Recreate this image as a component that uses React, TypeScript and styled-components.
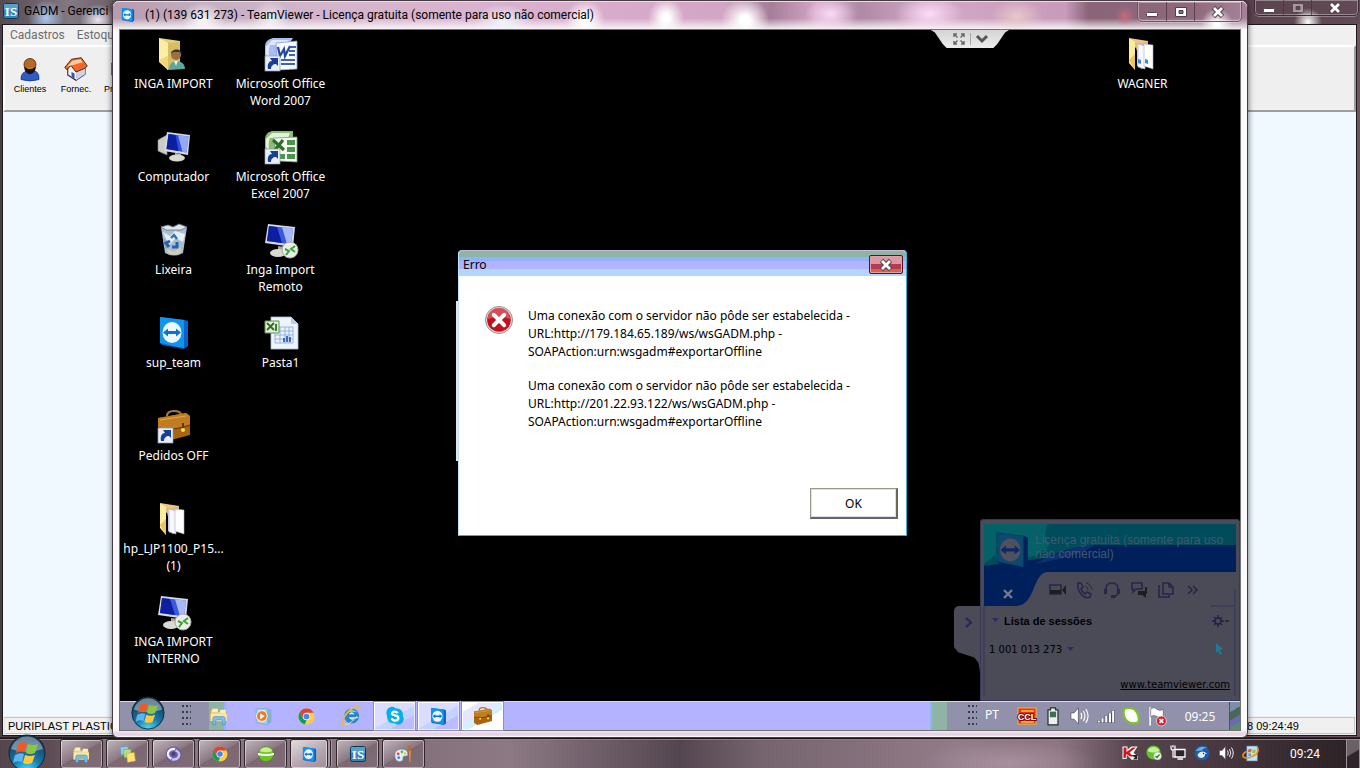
import React from 'react';
import styled, { createGlobalStyle } from 'styled-components';

const ui = 'Roboto, "Open Sans", sans-serif';
const remoteUi = '"Noto Sans", "Open Sans", sans-serif';
const arial = '"Liberation Sans", Arial, sans-serif';
const verdana = '"DejaVu Sans", Verdana, sans-serif';

const GlobalStyle = createGlobalStyle`
  * { box-sizing: border-box; }
  body { margin: 0; background: #4e424a; font-family: ${ui}; font-size: 12px; color: #000; overflow: hidden; }
  button { font: inherit; color: inherit; padding: 0; margin: 0; border: 0; background: none; }
  svg { display: block; flex: none; overflow: visible; }
  p { margin: 0; }
`;

const Screen = styled.div`
  position: relative;
  height: 100vh;
  display: flex;
  flex-direction: column;
  overflow: hidden;
`;

/* ---------- GADM window ---------- */

const MainWindow = styled.section`
  flex: 1;
  min-height: 0;
  display: flex;
  flex-direction: column;
  background: linear-gradient(90deg, #4a3f46, #8b7883 50%, #6d5661);
  padding: 0 3px 1px 2px;
  border-bottom: 1px solid #2a2228;
`;

const MainTitle = styled.header`
  height: 24px;
  flex: none;
  display: flex;
  justify-content: space-between;
  background:
    radial-gradient(ellipse 18px 18px at 46px 18px, #a9c8ee 0, transparent 100%),
    radial-gradient(ellipse 18px 16px at 98px 20px, #e9e4f2 0, transparent 100%),
    radial-gradient(ellipse 14px 14px at calc(100% - 52px) 22px, #fff 0, transparent 100%),
    linear-gradient(90deg, #554a50 0, #837984 70px, #6c6068 113px, #8e7783 60%, #5c444f 92%, #614955);
  margin: 0 -3px 0 -2px;
`;

const MainTitleText = styled.div`
  display: flex;
  gap: 5px;
  padding: 0 0 3px 3px;
  align-items: center;
  white-space: nowrap;
`;

const CaptionButtons = styled.div<{ $tall?: boolean }>`
  display: flex;
  height: ${(p) => (p.$tall ? 20 : 16)}px;
  border: 1px solid ${(p) => (p.$tall ? '#6d5a69' : '#3a2c34')};
  border-top: 0;
  border-radius: 0 0 5px 5px;
  box-shadow: inset 0 0 0 1px rgba(255, 255, 255, 0.35), 0 1px 0 rgba(255, 255, 255, 0.3);
  margin-right: ${(p) => (p.$tall ? 5 : 1)}px;
`;

const CaptionButton = styled.button<{ $wide?: boolean }>`
  width: ${(p) => (p.$wide ? 47 : 28)}px;
  display: flex;
  align-items: center;
  justify-content: center;
  & + & { border-left: 1px solid rgba(70, 50, 62, 0.7); }
`;

const MainBody = styled.div`
  flex: 1;
  min-height: 0;
  display: flex;
  flex-direction: column;
  border: 1px solid #1d181b;
  background: #f0f9ff;
`;

const MenuBar = styled.nav`
  height: 20px;
  flex: none;
  display: flex;
  align-items: center;
  gap: 12px;
  padding-left: 7px;
  background: #f0f0f0;
  color: #6d6d6d;
`;

const MenuItem = styled.button`
  cursor: default;
`;

const ToolBar = styled.div`
  height: 67px;
  flex: none;
  display: flex;
  padding: 10px 0 0 2px;
  background: #efefef;
  border-top: 2px solid #fff;
  border-left: 2px solid #fff;
  border-right: 2px solid #9d9d9d;
  border-bottom: 2px solid #9d9d9d;
`;

const ToolButton = styled.button<{ $start?: boolean }>`
  width: 46px;
  padding-left: ${(p) => (p.$start ? 5 : 0)}px;
  display: flex;
  flex-direction: column;
  align-items: ${(p) => (p.$start ? 'flex-start' : 'center')};
  gap: 2px;
  font-family: ${arial};
  font-size: 9px;
  line-height: 12px;
`;

const Workspace = styled.main`
  flex: 1;
`;

const StatusBar = styled.footer`
  height: 19px;
  flex: none;
  display: flex;
  justify-content: space-between;
  background: #f0f0f0;
  font-family: ${arial};
  font-size: 11px;
  line-height: 16px;
`;

const StatusCell = styled.div<{ $end?: boolean }>`
  width: ${(p) => (p.$end ? '112px' : '400px')};
  margin: 1px;
  padding-left: 3px;
  border: 1px solid;
  border-color: #c4c4c4 #c4c4c4 #c4c4c4 #e4e4e4;
  white-space: nowrap;
`;

/* ---------- TeamViewer window ---------- */

const ViewerWindow = styled.section`
  position: absolute;
  inset: 0 112px 30px 112px;
  display: flex;
  flex-direction: column;
  padding: 0 6px 6px;
  border: 1px solid #463a43;
  border-radius: 7px 7px 6px 6px;
  background:
    linear-gradient(180deg, transparent calc(100% - 8px), #e6cfe2 calc(100% - 3px), #efe2ec 100%),
    #fbf9fb;
  box-shadow: inset 0 0 0 1px rgba(255, 255, 255, 0.7), 0 0 6px rgba(0, 0, 0, 0.6);
`;

const ViewerTitle = styled.header`
  height: 28px;
  flex: none;
  display: flex;
  justify-content: space-between;
  margin: 0 -6px;
  padding-left: 8px;
  border-radius: 6px 6px 0 0;
  border-top: 1px solid #f5d7ee;
  background:
    radial-gradient(ellipse 22px 18px at 90px 18px, rgba(255, 255, 255, 0.9) 0, transparent 100%),
    radial-gradient(ellipse 20px 20px at 158px 18px, rgba(255, 255, 255, 0.7) 0, transparent 100%),
    radial-gradient(ellipse 30px 18px at 390px 20px, rgba(240, 246, 255, 0.95) 0, transparent 100%),
    radial-gradient(ellipse 20px 20px at 472px 18px, #fff 20%, transparent 100%),
    radial-gradient(ellipse 18px 20px at 553px 16px, #fff 20%, transparent 100%),
    radial-gradient(ellipse 24px 22px at 632px 18px, #fff 20%, transparent 100%),
    radial-gradient(ellipse 26px 18px at 718px 12px, rgba(255, 226, 252, 0.9) 0, transparent 100%),
    radial-gradient(ellipse 34px 18px at 816px 12px, rgba(255, 226, 252, 0.9) 0, transparent 100%),
    radial-gradient(ellipse 26px 16px at 904px 14px, rgba(240, 208, 205, 0.8) 0, transparent 100%),
    radial-gradient(ellipse 10px 10px at 1012px 14px, rgba(206, 110, 120, 0.8) 0, transparent 100%),
    radial-gradient(ellipse 16px 16px at calc(100% - 30px) 22px, #fff 10%, transparent 100%),
    linear-gradient(180deg, transparent 60%, rgba(255, 255, 255, 0.85) 100%),
    linear-gradient(90deg, #b79aad 0, #c6b0c3 9%, #d3b5cb 18%, #d9b3cf 30%, #d8abcb 44%, #d3a5c4 54%, #a57e98 58%, #d3a6c4 62%, #b08aa4 66%, #d2a9c6 72%, #c79bb9 84%, #8a6479 86%, #8e677b 95%, #a68299 100%);
`;

const ViewerTitleText = styled.div`
  display: flex;
  align-items: center;
  gap: 10px;
  padding-bottom: 1px;
  white-space: nowrap;
`;

const Remote = styled.div`
  flex: 1;
  min-height: 0;
  display: flex;
  flex-direction: column;
  border: 1px solid #6f7570;
  background: #000;
  font-family: ${remoteUi};
`;

const RemoteDesktop = styled.div`
  position: relative;
  flex: 1;
  min-height: 0;
  display: flex;
  justify-content: space-between;
  padding: 8px 44px 0 0;
  color: #fff;
`;

const IconGrid = styled.div<{ $rows: number }>`
  display: grid;
  grid-auto-flow: column;
  grid-template-rows: repeat(${(p) => p.$rows}, 93px);
  grid-auto-columns: 107px;
  align-content: start;
`;

const Shortcut = styled.button`
  display: flex;
  flex-direction: column;
  align-items: center;
  gap: 5px;
  line-height: 17px;
  color: #fff;
  text-align: center;
  white-space: pre-line;
`;

const FoldTab = styled.div`
  position: absolute;
  top: 0;
  right: 231px;
  width: 78px;
  height: 18px;
  display: flex;
  justify-content: center;
  align-items: center;
  gap: 5px;
  background: linear-gradient(#d4d4d4, #ececec);
  clip-path: polygon(0 0, 100% 0, 95% 14%, 85% 78%, 80% 100%, 20% 100%, 15% 78%, 5% 14%);
`;

const FoldDivider = styled.span`
  width: 1px;
  height: 12px;
  background: #a8a8a8;
`;

const HiddenEdge = styled.div`
  position: absolute;
  left: 336px;
  top: 271px;
  width: 2px;
  height: 160px;
  background: #e4e4ea;
`;

const Dialog = styled.div`
  position: absolute;
  left: 338px;
  top: 220px;
  width: 449px;
  color: #000;
  background: #fff;
  border: 1px solid #2bb5d8;
  border-left-color: #b9e6f7;
  border-top-color: #c3c0da;
  border-radius: 4px 4px 0 0;
`;

const DialogTitle = styled.div`
  height: 25px;
  display: flex;
  justify-content: space-between;
  align-items: center;
  padding: 2px 3px 0 4px;
  border-radius: 3px 3px 0 0;
  background: linear-gradient(#8fb3a5 0 6px, #8fb3ff 6px 10px, #b3b3ff 10px 18px, #b3d5ff 18px);
`;

const DialogClose = styled.button`
  width: 34px;
  height: 19px;
  display: flex;
  align-items: center;
  justify-content: center;
  border: 1px solid #4a1b25;
  border-radius: 2px;
  box-shadow: inset 0 0 0 1px #dfa3a5;
  background: linear-gradient(#dc96a4 0 8px, #b43c50 8px 13px, #d5634e 13px);
`;

const DialogBody = styled.div`
  display: flex;
  gap: 15px;
  padding: 30px 26px 0;
`;

const Message = styled.div`
  display: flex;
  flex-direction: column;
  gap: 16px;
  padding-top: 1px;
  line-height: 18px;
  white-space: pre;
`;

const DialogActions = styled.div`
  display: flex;
  justify-content: flex-end;
  padding: 57px 8px 16px;
`;

const OkButton = styled.button`
  width: 88px;
  height: 31px;
  background: #fff;
  border: 1px solid #9a9a8c;
  border-right: 2px solid #66665a;
  border-bottom: 2px solid #66665a;
  box-shadow: inset 1px 1px 0 #dcdcf4, inset -1px -1px 0 #dcdcf4;
`;

/* ---------- Session panel ---------- */

const SessionPanel = styled.aside`
  position: absolute;
  right: 0;
  bottom: 0;
  display: flex;
  align-items: flex-start;
  color: #000;
`;

const PanelHandle = styled.button`
  width: 26px;
  height: 66px;
  margin-top: 87px;
  display: flex;
  padding: 11px 0 0 10px;
  background: #4b4b58;
  border-radius: 5px 0 0 0;
  clip-path: polygon(0 0, 100% 0, 100% 100%, 94% 86%, 78% 78%, 16% 70%, 0 62%);
`;

const PanelBox = styled.div`
  position: relative;
  width: 260px;
  height: 182px;
  padding: 5px 4px 0;
  background: #4b4b58;
  border: 1px solid #383858;
  border-radius: 3px 3px 0 0;
  display: flex;
  flex-direction: column;
`;

const PanelArt = styled.svg`
  position: absolute;
  left: 3px;
  top: 4px;
`;

const PanelHeader = styled.div`
  position: relative;
  height: 48px;
  display: flex;
  gap: 5px;
  padding: 8px 0 0 10px;
  font-family: ${arial};
  color: #3f5a6e;
  line-height: 14px;
`;

const PanelTools = styled.div`
  position: relative;
  height: 34px;
  display: flex;
  align-items: center;
  gap: 9px;
  padding-left: 17px;
  & > :first-child { margin: 8px 26px 0 0; }
`;

const PanelRow = styled.div<{ $bold?: boolean }>`
  display: flex;
  align-items: center;
  justify-content: space-between;
  height: ${(p) => (p.$bold ? 27 : 30)}px;
  padding: 0 5px 0 ${(p) => (p.$bold ? 7 : 4)}px;
  font-family: ${(p) => (p.$bold ? arial : verdana)};
  font-size: ${(p) => (p.$bold ? 11 : 10)}px;
  font-weight: ${(p) => (p.$bold ? 700 : 400)};
`;

const RowLabel = styled.span`
  display: flex;
  align-items: center;
  gap: 5px;
`;

const PanelLink = styled.a`
  align-self: flex-end;
  margin: 14px 5px 0 0;
  font-family: ${verdana};
  font-size: 10px;
  line-height: 14px;
  color: #000;
`;

/* ---------- Taskbars ---------- */

const RemoteTaskbar = styled.footer`
  position: relative;
  height: 29px;
  flex: none;
  display: flex;
  align-items: stretch;
  border-top: 1px solid #d9d9e6;
  background: linear-gradient(90deg, #9191ab 0 89px, #8fb3a5 89px 104px, #8fb3ff 104px 106px, #b3b3ff 106px calc(100% - 310px), #8fb3ff calc(100% - 310px) calc(100% - 308px), #8fb3a5 calc(100% - 308px) calc(100% - 293px), #9191ab calc(100% - 293px));
`;

const RemoteStart = styled.button`
  width: 34px;
  height: 32px;
  margin: -4px 17px 0 11px;
  display: flex;
  align-items: flex-end;
`;

const Grip = styled.span`
  width: 9px;
  height: 22px;
  align-self: center;
  background: radial-gradient(circle at 1px 1px, #33404c 1px, transparent 1px) 0 0 / 4px 6px;
`;

const RemoteItems = styled.div`
  flex: 1;
  display: flex;
  gap: 3px;
  padding-left: 7px;
`;

const RemoteItem = styled.button<{ $state?: 'open' | 'active' }>`
  width: 41px;
  display: flex;
  align-items: center;
  justify-content: center;
  ${(p) => p.$state === 'open' && `
    background: linear-gradient(150deg, #dcdcff 0 52%, #c4d2ff 52% 70%, #bcbcff 70%);
    box-shadow: 0 0 0 1px #8f8fb0, inset 1px 1px 0 #fff, inset -1px -1px 0 #e9e9ff;
  `}
  ${(p) => p.$state === 'active' && `
    background: linear-gradient(150deg, #fff 0 20%, #e6e6ff 20% 45%, #d4f0ff 45% 60%, #fff 60%);
    box-shadow: 0 0 0 1px #8f8fb0, inset 0 0 0 1px #fff;
  `}
`;

const RemoteTray = styled.div`
  display: flex;
  align-items: center;
  color: #fff;
`;

const TrayIcons = styled.div<{ $gap: number }>`
  display: flex;
  gap: ${(p) => p.$gap}px;
`;

const Lang = styled.span`
  width: 40px;
  padding-left: 8px;
  padding-bottom: 4px;
`;

const RemoteClock = styled.time`
  width: 62px;
  padding-left: 4px;
  text-align: center;
`;

const RemoteShow = styled.button`
  width: 11px;
  align-self: stretch;
  border-left: 1px solid #44586a;
  background: linear-gradient(150deg, #7d8ea5 0 30%, #46695c 30% 55%, #6a6ab0 55% 75%, #5d8a70 75%);
`;

const HostTaskbar = styled.footer`
  position: relative;
  height: 30px;
  flex: none;
  display: flex;
  border-top: 1px solid #1c161a;
  box-shadow: inset 0 1px 0 #8d7e87;
  background:
    radial-gradient(ellipse 90px 22px at 1010px 24px, rgba(190, 165, 180, 0.5), transparent),
    linear-gradient(90deg, #55454d 0, #5d4c54 50px, #8b7681 120px, #84717b 420px, #8c7984 510px, #544650 680px, #75646e 760px, #937c89 960px, #8d7682 1060px, #57454e 1130px, #4a3941 1210px, #33282d 1310px, #2a2226);
`;

const HostStart = styled.button`
  position: relative;
  width: 38px;
  margin: -5px 14px 0 8px;
`;

const HostItems = styled.div`
  flex: 1;
  display: flex;
  gap: 3px;
`;

const HostItem = styled.button<{ $active?: boolean; $stack?: boolean }>`
  width: 43px;
  display: flex;
  align-items: center;
  justify-content: center;
  border: 1px solid #2f252a;
  border-bottom: 0;
  border-radius: 3px;
  box-shadow: inset 0 0 0 1px rgba(255, 255, 255, 0.45);
  background: ${(p) =>
    p.$active
      ? 'linear-gradient(150deg, #e4dde1, #b5a7b0 55%, #9f8d98)'
      : 'linear-gradient(150deg, #c2b7bd, #8a7782 48%, #7b6872 50%, #806c77)'};
  ${(p) => p.$stack && 'width: 38px; margin-right: 5px; box-shadow: inset 0 0 0 1px #d8cfd5, 2px 0 0 #a5969f, 3px 0 0 #2f252a, 4px 0 0 #a5969f;'}
`;

const HostTray = styled.div`
  display: flex;
  align-items: center;
  color: #fff;
`;

const HostClock = styled.time`
  width: 87px;
  padding-left: 5px;
  text-align: center;
`;

const HostShow = styled.button`
  width: 14px;
  align-self: stretch;
  border: 1px solid #9c8f96;
  border-bottom: 0;
  background: linear-gradient(150deg, #6c6067 45%, #2d2529 50%);
`;

/* ---------- Icons ---------- */

type IconProps = { size?: number };

const Svg = ({ size = 32, children }: IconProps & { children: React.ReactNode }) => (
  <svg width={size} height={size} viewBox="0 0 32 32" aria-hidden="true">{children}</svg>
);

const Arrow = () => (
  <g>
    <rect x="0" y="18" width="15" height="15" fill="#e8eef8" stroke="#8f9bb5" strokeWidth=".7" />
    <path d="M3 31c-1-5 1-8 4-8l-2-3h8v8l-2-2c-3 0-5 2-5 5z" fill="#173f96" />
  </g>
);

const FolderUser = () => (
  <Svg>
    <path d="M1 0l21 3v24l-12 3z" fill="#e8d080" />
    <path d="M8 5l14-1v25l-13 3z" fill="#d9bd62" />
    <path d="M1 0l9 5v27l-9-8z" fill="#fbeea5" />
    <path d="M1 22l9 10V18z" fill="#efd676" />
    <circle cx="18" cy="17" r="5" fill="#9c6f4c" />
    <path d="M13 16c0-6 11-6 11 0l-3-2h-6z" fill="#3a3430" />
    <path d="M11 32c0-7 4-9 8-9s8 3 8 8z" fill="#5da79a" />
    <path d="M16 23l2 5 2-5z" fill="#e6f0ef" />
  </Svg>
);

const WordIcon = () => (
  <Svg>
    <path d="M8 0h20l-4 6v26H0V8q0-6 8-8z" fill="#a9bdf0" />
    <path d="M7 2h17l-4 5H5q-2 4-1 12l-3-3V9z" fill="#dfe8ff" />
    <path d="M11 5l21-2v28l-19 1z" fill="#f8faff" stroke="#7d97d6" strokeWidth=".8" />
    <path d="M13 9l2 9 4-7 1 7 5-10" stroke="#25479e" strokeWidth="2.200" fill="none" />
    <path d="M25 9h6M24 13h6M24 17h6M16 22h14M16 26h14" stroke="#3c62bd" strokeWidth="2" />
    <Arrow />
  </Svg>
);

const ExcelIcon = () => (
  <Svg>
    <path d="M7 0h21v6L14 30H0V8q0-6 7-8z" fill="#8dba7a" />
    <path d="M7 2h18l-2 5H5q-2 4-1 12l-3-3V8z" fill="#e1f3d8" />
    <path d="M8 7l24-1v25l-18-1z" fill="#f5fbf2" stroke="#6fa45c" strokeWidth=".8" />
    <path d="M22 9h8v5h-8zM22 16h8v5h-8zM22 23h8v5h-8zM15 23h5v5h-5z" fill="#4e9350" />
    <path d="M8 9l11 10M18 9l-8 10" stroke="#2c6e28" strokeWidth="3.200" />
    <Arrow />
  </Svg>
);

const Monitor = ({ remote }: { remote?: boolean }) => (
  <Svg>
    {!remote && <path d="M0 9l9-5v20l-9-4z" fill="#c9cdc4" stroke="#8d9188" strokeWidth=".6" />}
    {remote ? (
      <>
        <path d="M13 22l6 1v5h-6z" fill="#a6a9a0" />
        <ellipse cx="13" cy="29" rx="8" ry="4" fill="#d9dad0" />
        <path d="M3 0l27 3-2 20-28-4z" fill="#d6dae2" />
        <path d="M4 2l24 2.500-2 16-24-3.500z" fill="#3a58e0" />
        <path d="M4 2l8 1 5 16-15-2z" fill="#0b1fa0" />
        <path d="M17 3.300l11 1.200-2 16-4-.500z" fill="#a9b9f6" />
        <circle cx="25" cy="26" r="8" fill="#eceee9" stroke="#a7aaa2" />
        <path d="M20 25l4 2-3 4M30 22l-4 3 4 3" stroke="#3fa33b" strokeWidth="2" fill="none" />
      </>
    ) : (
      <>
        <path d="M17 22l6 1v4h-6z" fill="#a6a9a0" />
        <ellipse cx="19" cy="27" rx="8" ry="3.500" fill="#d9dad0" />
        <path d="M9 1l23 3-2 20-24-4z" fill="#d6dae2" />
        <path d="M10.500 3l20 2.500-2 16-20-3.500z" fill="#2f4fe0" />
        <path d="M10.500 3l7 1 3 16-12-2z" fill="#0b1fa0" />
        <path d="M20 4.300l10.500 1.200-2 16-4-.700z" fill="#95a8f4" />
      </>
    )}
  </Svg>
);

const Bin = () => (
  <Svg>
    <path d="M3 3l26 0-4 26q-9 5-18 0z" fill="#b4c8dc" opacity=".95" />
    <path d="M3 3l7-2 5 2 6-3 8 3-6 3H8z" fill="#dfe6ec" stroke="#6b7885" strokeWidth=".9" />
    <path d="M5 8l7 4 5-5 10 3-2 8-7-4-7 7z" fill="#e7eff6" />
    <path d="M5 14l5 4-1 7-2-1z" fill="#8ea6bd" />
    <path d="M9 25l7 3 7-5-1 6q-6 3-12 0z" fill="#d5cfae" />
    <path d="M13 14l3-3 3 4" stroke="#2a72b9" strokeWidth="2.400" fill="none" />
    <path d="M19 18v5h-5M11 23l-3-4 4-2" stroke="#2a62a9" strokeWidth="3" fill="none" />
  </Svg>
);

const TeamViewerIcon = ({ size, dim }: IconProps & { dim?: boolean }) => (
  <Svg size={size}>
    <path d="M2 0l25 3 3 1v25l-4 3-22-4-2-2z" fill={dim ? '#06225e' : '#0a62c9'} />
    <path d="M2 0l24 3v28L2 26z" fill={dim ? '#0b4a6e' : '#0d95f2'} />
    <ellipse cx="14" cy="15.500" rx="9.500" ry="10.500" fill={dim ? '#50505e' : '#eef6ff'} />
    <path d="M5 15.500l5-4v2.500h8v-2.500l5 4-5 4v-2.500h-8v2.500z" fill={dim ? '#0a2a66' : '#0b73d4'} />
  </Svg>
);

const SheetIcon = () => (
  <Svg>
    <path d="M6 0h20l7 7v25H6z" fill="#eef4fd" stroke="#a9bbda" strokeWidth=".8" />
    <path d="M26 0l7 7h-7z" fill="#bccbe6" />
    <path d="M10 10h18v16H10zM10 14h18M10 18h18M10 22h18M15 10v16M20 10v16M24 10v16" stroke="#93b1df" fill="none" />
    <path d="M19 25v-4M22 25v-6M25 25v-5" stroke="#3e6cb8" strokeWidth="2" />
    <path d="M0 4h14v12H0z" fill="#dff0d6" stroke="#5a9a4a" />
    <path d="M2 6l7 7M9 6l-7 7M11 7v7" stroke="#2c6e28" strokeWidth="1.800" />
  </Svg>
);

const Briefcase = ({ size, link }: IconProps & { link?: boolean }) => (
  <Svg size={size}>
    <path d="M9 6q0-5 7-5t7 4" stroke="#a37a3c" strokeWidth="2.200" fill="none" />
    <path d="M0 8l28-5 4 3v19L6 32l-6-4z" fill="#a8640f" />
    <path d="M0 8l28-5 4 3v9q-14 6-32 4z" fill="#c07c1e" />
    <path d="M0 18q16 3 32-3" stroke="#5e3508" fill="none" strokeWidth="1.200" />
    <path d="M2 10l26-4" stroke="#e2ab55" />
    <path d="M25 13v6" stroke="#5e3508" strokeWidth="2" />
    <circle cx="25" cy="20" r="2" fill="#ffe14f" />
    {link ? <Arrow /> : <circle cx="11" cy="21" r="1.800" fill="#ffe14f" />}
  </Svg>
);

const FolderFiles = ({ blue }: { blue?: boolean }) => (
  <Svg>
    <path d="M2 0l19 3v4l-14 3z" fill="#eec787" />
    <path d="M8 5l13-1v24l-7 3z" fill="#e3b877" />
    <path d="M10 6l6 1v23l-6-2z" fill="#d4d7ea" />
    <path d="M11 6l7 2v23l-7-2z" fill="#f6f7ff" stroke="#adb0cd" strokeWidth=".6" />
    <path d="M17 6l9 1v24l-9-3z" fill="#fff" stroke="#a9abc6" strokeWidth=".6" />
    {blue && <path d="M11 21l3 1v4l-3-1zM18 21l3 1v4l-3-1z" fill="#3b8ec4" />}
    <path d="M2 0l6 4v28l-6-7z" fill="#fbeb9b" />
    <path d="M2 22l6 10V16z" fill="#eac65b" />
  </Svg>
);

const Person = () => (
  <Svg size={24}>
    <path d="M4 30q-1-11 12-12t12 12q-12 4-24 0z" fill="#2d5cc8" stroke="#17317c" />
    <circle cx="16" cy="10" r="8" fill="#b96a22" stroke="#3b1d08" />
    <path d="M8 13q8 5 16 0-1 9-8 10-7-1-8-10z" fill="#1d120c" />
    <path d="M12 13q4 3 8 0v2q-4 2-8 0z" fill="#c5833f" />
  </Svg>
);

const House = () => (
  <Svg size={24}>
    <path d="M5 12v12l11 7 12-8V11z" fill="#f2f2fa" stroke="#222" strokeWidth="1.400" />
    <path d="M16 18v13l12-8V11z" fill="#cfd2e6" />
    <path d="M1 14L10 3l13-2 8 11-3 3-12 5-7-9-5 6z" fill="#f0692a" stroke="#4b1a08" strokeWidth="1.200" />
    <path d="M4 13l7-8 11-2 3 4-14 4z" fill="#ffc9a4" />
    <path d="M10 20l4 2v7l-4-3z" fill="#3a51b5" />
  </Svg>
);

const Product = () => (
  <Svg size={24}>
    <path d="M10 8l12-5 10 5v16l-10 6-12-6z" fill="#efae62" stroke="#98591d" />
  </Svg>
);

const IsIcon = ({ size }: IconProps) => (
  <svg width={size} height={size} viewBox="0 0 16 16" aria-hidden="true">
    <rect x=".5" y=".5" width="15" height="15" rx="2" fill="#3685b8" stroke="#12384f" />
    <path d="M1 1h14v6H1z" fill="#6fb3d9" opacity=".6" />
    <text x="8" y="13" fontFamily="Liberation Serif" fontWeight="700" fontSize="13" fill="#fff" textAnchor="middle">IS</text>
  </svg>
);

const Orb = ({ size }: IconProps) => (
  <svg width={size} height={size} viewBox="0 0 38 38" aria-hidden="true">
    <defs>
      <radialGradient id="orbFill" cx=".5" cy="1" r=".9">
        <stop offset="0" stopColor="#4fe0ff" />
        <stop offset=".45" stopColor="#1878ac" />
        <stop offset="1" stopColor="#163a58" />
      </radialGradient>
    </defs>
    <circle cx="19" cy="19" r="18" fill="url(#orbFill)" stroke="#13222f" />
    <path d="M3 15a16.500 16.500 0 0 1 32 0q-16 6-32 0z" fill="#fff" opacity=".38" />
    <path d="M10 10q5-3 9-1l-2 9q-5-2-9 1z" fill="#ef5a29" />
    <path d="M20 10q5 2 10 0l-3 9q-5 2-9 0z" fill="#8cc63f" />
    <path d="M7 21q5-3 9-1l-2 8q-5-2-9 1z" fill="#5cb5ee" />
    <path d="M17 21q5 2 10 0l-3 8q-5 2-9 0z" fill="#ffcb3d" />
  </svg>
);

const Explorer = ({ size }: IconProps) => (
  <Svg size={size}>
    <path d="M1 5h10l2 3h16v18H1z" fill="#ecd27b" stroke="#a98b3a" strokeWidth=".8" />
    <path d="M4 3h10v6H4zM18 5h10v6H18z" fill="#f7f0c0" />
    <path d="M1 12h29v13H1z" fill="#f9e9a4" />
    <path d="M5 31V21q0-4 4-4h14q4 0 4 4v10h-5v-6q0-2-2-2h-8q-2 0-2 2v6z" fill="#7cc0ea" stroke="#3f86bb" />
  </Svg>
);

const MediaPlayer = () => (
  <Svg size={18}>
    <path d="M4 3h19l7 3v21l-7 4-19-3z" fill="#a9d4ec" stroke="#6a98bc" />
    <path d="M23 3l7 3v21l-7 4z" fill="#7fb2d2" />
    <circle cx="14" cy="16" r="9.500" fill="#f07a1f" stroke="#fff" strokeWidth="1.500" />
    <path d="M11 11l8 5-8 6z" fill="#fff" />
  </Svg>
);

const Chrome = ({ size }: IconProps) => (
  <Svg size={size}>
    <circle cx="16" cy="16" r="15" fill="#ffcd40" />
    <path d="M16 9h13.300A15 15 0 0 0 3 8.500L10 20z" fill="#db4437" />
    <path d="M3 8.500L10 20l6 3-3 7.700A15 15 0 0 1 3 8.500z" fill="#0f9d58" />
    <circle cx="16" cy="16" r="7" fill="#f1f1f1" />
    <circle cx="16" cy="16" r="5.400" fill="#4285f4" />
  </Svg>
);

const InternetExplorer = () => (
  <Svg size={20}>
    <circle cx="17" cy="16" r="12" fill="#2586cc" />
    <path d="M8 11q8-9 18-1-9-2-18 1z" fill="#8fd0f4" />
    <path d="M12 13q5-6 10 0zM12 18h17q-2 2-8 2-3 5-9-2z" fill="#d4ecfb" />
    <path d="M6 30Q-2 30 5 18T20 3q11-5 9 4" stroke="#e9b93a" strokeWidth="2.800" fill="none" />
    <path d="M6 30q10-1 20-14" stroke="#f6dc86" strokeWidth="1.600" fill="none" />
  </Svg>
);

const Skype = () => (
  <Svg size={18}>
    <path d="M3 3q7-6 14-1 14 0 13 14 4 7-2 13-7 5-13 0Q2 30 2 17-1 9 3 3z" fill="#00aff0" />
    <path d="M21 11q-2-3-6-3-4 .500-4 4 0 2 5 3 6 1 6 5 0 4-6 4-5 0-6-4" stroke="#fff" strokeWidth="4" fill="none" />
  </Svg>
);

const Notes = () => (
  <Svg size={17}>
    <path d="M2 2l15-1 1 14-14 2z" fill="#8fd0ee" stroke="#5390b0" />
    <path d="M8 7l14-1 2 14-14 2z" fill="#b6e07f" stroke="#759c48" />
    <path d="M14 14l15-2 2 16-15 3z" fill="#ffe173" stroke="#b99a33" />
  </Svg>
);

const Swirl = () => (
  <Svg size={17}>
    <circle cx="16" cy="16" r="15" fill="#6a60a4" />
    <path d="M12 24Q2 18 7 10q4-6 12-4" stroke="#f3f1ff" strokeWidth="4.500" fill="none" />
    <path d="M20 8q9 5 6 12-4 7-13 5" stroke="#c9c4ea" strokeWidth="4.500" fill="none" />
    <circle cx="16" cy="15" r="4" fill="#4a4184" />
  </Svg>
);

const GreenBall = () => (
  <Svg size={16}>
    <circle cx="16" cy="16" r="15" fill="#6cc820" stroke="#3c8a10" />
    <path d="M3 10a15 15 0 0 1 26 0q-13 5-26 0z" fill="#c6f08a" />
    <path d="M0 14q16 4 32 0v4q-16 4-32 0z" fill="#fff" />
  </Svg>
);

const Palette = () => (
  <Svg size={17}>
    <path d="M0 20Q-2 7 11 6q14 0 13 10-1 4-6 3-4 0-3 5 0 5-6 5-8 0-9-9z" fill="#e1eef8" stroke="#6d8da8" />
    <circle cx="6" cy="15" r="2.600" fill="#e2493b" />
    <circle cx="13" cy="11" r="2.600" fill="#57b947" />
    <circle cx="7" cy="22" r="2.600" fill="#3c87da" />
    <circle cx="19" cy="14" r="2.200" fill="#efc42f" />
    <path d="M26 8h4l-1 22h-2z" fill="#f08a24" />
    <path d="M24 0h7l-1 9h-4z" fill="#b96c2d" />
  </Svg>
);

const Caption = ({ kind, dim }: { kind: 'min' | 'max' | 'close'; dim?: boolean }) => (
  <svg width="14" height="12" viewBox="0 0 14 12" opacity={dim ? 0.45 : 1} aria-hidden="true">
    {kind === 'min' && <rect x="1.500" y="6.500" width="11" height="4" rx="1" fill="#fff" stroke="#50424b" />}
    {kind === 'max' && <path d="M1.500 1.500h11v9h-11zM5 4.500v3h4v-3z" fill="#fff" fillRule="evenodd" stroke="#50424b" />}
    {kind === 'close' && (
      <>
        <path d="M2.500 1.500l9 9M11.500 1.500l-9 9" stroke="#50424b" strokeWidth="4.600" />
        <path d="M3 2l8 8M11 2l-8 8" stroke="#fff" strokeWidth="2.800" />
      </>
    )}
  </svg>
);

const ErrorIcon = () => (
  <Svg size={28}>
    <circle cx="16" cy="16" r="15.500" fill="#d4d4d8" stroke="#8b8b93" />
    <circle cx="16" cy="16" r="13.500" fill="#c3101a" />
    <path d="M3 15a13 13 0 0 1 26 0q-13-5-26 0z" fill="#e0606a" opacity=".75" />
    <path d="M10 10l12 12M22 10L10 22" stroke="#fff" strokeWidth="4.500" strokeLinecap="round" />
  </Svg>
);

const CclIcon = () => (
  <svg width="20" height="20" viewBox="0 0 20 20" aria-hidden="true">
    <rect x="1" y="2" width="18" height="16" fill="#e23412" stroke="#ffb040" />
    <path d="M4 5h13M4 16h13" stroke="#ff9a2e" strokeWidth="2" />
    <text x="10" y="14" fontFamily="Liberation Sans" fontWeight="700" fontSize="9" fill="#fff" stroke="#7a1008" strokeWidth="2" paintOrder="stroke" textAnchor="middle">CCL</text>
  </svg>
);

const Battery = () => (
  <Svg size={20}>
    <path d="M12 3h8v3h4v24H8V6h4z" fill="#e9f1ec" stroke="#26332c" strokeWidth="2" />
    <path d="M11 9h10v9H11z" fill="#426b55" />
  </Svg>
);

const Speaker = ({ size = 20 }: IconProps) => (
  <Svg size={size}>
    <path d="M3 11h5l7-8v26l-7-8H3z" fill="#fff" stroke="#505060" strokeWidth="1.200" />
    <path d="M19 11q3 5 0 10M23 8q5 8 0 16M27 5q7 11 0 22" stroke="#fff" strokeWidth="1.800" fill="none" />
  </Svg>
);

const Signal = () => (
  <Svg size={20}>
    <path d="M6 27v-4M12 27v-8M18 27V15M24 27V11M29 27V7" stroke="#4c4c62" strokeWidth="5" />
    <path d="M6 26.500v-3M12 26.500v-7M18 26.500V15.500M24 26.500V11.500M29 26.500V7.500" stroke="#fff" strokeWidth="3.200" />
  </Svg>
);

const GreenLeaf = () => (
  <Svg size={20}>
    <path d="M5 5q10-4 17 1 8 8 6 20-9 4-17-1Q2 17 5 5z" fill="#fff" stroke="#7cc520" strokeWidth="3.400" />
  </Svg>
);

const Flag = () => (
  <Svg size={20}>
    <path d="M5 2v29" stroke="#fff" strokeWidth="2.500" />
    <path d="M6 4q6-3 10 1t10 0v13q-5 3-10-1t-10 0z" fill="#fff" stroke="#55556a" />
    <circle cx="23" cy="24" r="8" fill="#d1242d" stroke="#fff" />
    <path d="M20 21l6 6M26 21l-6 6" stroke="#fff" strokeWidth="2.500" />
  </Svg>
);

const Kaspersky = () => (
  <Svg size={16}>
    <path d="M1 3h10v6l8-6h12l-8 13 8 6v8H20L10 20l-1 8H1z" fill="#fff" />
    <path d="M3 5h6v9L21 5h7L15 15l7 8h-6L9 18l-2 8H3z" fill="#d3141c" />
    <path d="M18 20l12 0v9h-9l5-4z" fill="#222" />
  </Svg>
);

const GreenCheck = () => (
  <Svg size={16}>
    <circle cx="15" cy="15" r="14" fill="#63c22a" />
    <path d="M3 12a13 13 0 0 1 24 0q-12 6-24 0z" fill="#c2f095" />
    <circle cx="23" cy="22" r="8" fill="#f2f6ee" stroke="#7c9a70" />
    <path d="M19 22l3 3 5-6" stroke="#2a7a1a" strokeWidth="2.400" fill="none" />
  </Svg>
);

const Network = () => (
  <Svg size={16}>
    <path d="M10 9h20v15H10zM15 28h11" stroke="#fff" strokeWidth="2.600" fill="#2e2529" />
    <path d="M2 1v5q0 4 4 4t4-4V1M6 0v5M6 10v14h5" stroke="#fff" strokeWidth="2.400" fill="none" />
  </Svg>
);

const BirdIcon = () => (
  <Svg size={16}>
    <circle cx="16" cy="16" r="15" fill="#1d5ca6" />
    <path d="M3 12Q12 0 26 5q-8 1-10 6z" fill="#67b0ea" />
    <path d="M7 19q6-8 14-5l5 3-4 1q0 8-8 8-6-1-7-7z" fill="#e9eef4" />
    <circle cx="19" cy="17" r="1.500" fill="#222" />
  </Svg>
);

const UpdateIcon = () => (
  <Svg size={17}>
    <path d="M9 2h20v28H9z" fill="#bfe2f7" stroke="#4f98c8" />
    <path d="M12 8q4-2 6 0l-1 6q-3-2-6 0z" fill="#ef5a29" />
    <path d="M20 8q3 2 6 0l-1 6q-3 2-6 0z" fill="#8cc63f" />
    <path d="M12 16h5v5h-5z" fill="#3fa1e6" />
    <path d="M19 16h5v5h-5z" fill="#ffcb3d" />
    <path d="M29 4q5 10-8 17T2 22q-2-5 6-10" stroke="#f08a24" strokeWidth="3" fill="none" />
  </Svg>
);

const line = { fill: 'none', stroke: '#26264a', strokeWidth: 1.6 };

const Camera = () => (
  <svg width="18" height="16" viewBox="0 0 18 16" aria-hidden="true">
    <path d="M1 3h11v9H1z" {...line} />
    <path d="M1 8h11v4H1zM13 8l4-5v10z" fill="#1d1d22" />
  </svg>
);
const Phone = () => (
  <svg width="18" height="16" viewBox="0 0 18 16" aria-hidden="true">
    <path d="M2 1l3 0 2 4-2 2q1 3 4 5l2-2 4 2-1 3q-5 2-9-3T2 1z" {...line} />
    <path d="M9 4q3 1 3 4M10 1q5 1 6 7" {...line} strokeWidth={1} />
  </svg>
);
const Headset = () => (
  <svg width="18" height="16" viewBox="0 0 18 16" aria-hidden="true">
    <path d="M3 9V7q0-6 6-6t6 6v2q0 5-5 6" {...line} />
    <path d="M1 7h3v5H1zM14 7h3v5h-3zM8 13h4v3H8z" fill="#26264a" />
  </svg>
);
const Chat = () => (
  <svg width="18" height="16" viewBox="0 0 18 16" aria-hidden="true">
    <path d="M2 1h10v6H6l-3 3V7H2z" {...line} />
    <path d="M8 9h7V5h2v7h-1v4l-4-3H8z" fill="#1d1d22" />
  </svg>
);
const Pages = () => (
  <svg width="18" height="16" viewBox="0 0 18 16" aria-hidden="true">
    <path d="M6 1h6l4 4v7H6zM12 1v4h4" {...line} />
    <path d="M3 4H2v11h10v-2" {...line} />
  </svg>
);
const Chevrons = () => (
  <svg width="18" height="16" viewBox="0 0 18 16" aria-hidden="true">
    <path d="M4 4l4 4-4 4M9 4l4 4-4 4" {...line} />
  </svg>
);
const Down = () => (
  <svg width="7" height="5" viewBox="0 0 7 5" aria-hidden="true"><path d="M0 0h7L3.500 4z" fill="#2c2c66" /></svg>
);

/* ---------- Page ---------- */

const shortcuts = [
  { label: 'INGA IMPORT', icon: <FolderUser /> },
  { label: 'Computador', icon: <Monitor /> },
  { label: 'Lixeira', icon: <Bin /> },
  { label: 'sup_team', icon: <TeamViewerIcon size={32} /> },
  { label: 'Pedidos OFF', icon: <Briefcase size={32} link /> },
  { label: 'hp_LJP1100_P15...\n(1)', icon: <FolderFiles /> },
  { label: 'INGA IMPORT\nINTERNO', icon: <Monitor remote /> },
  { label: 'Microsoft Office\nWord 2007', icon: <WordIcon /> },
  { label: 'Microsoft Office\nExcel 2007', icon: <ExcelIcon /> },
  { label: 'Inga Import\nRemoto', icon: <Monitor remote /> },
  { label: 'Pasta1', icon: <SheetIcon /> },
];

const WindowControls = ({ tall }: { tall?: boolean }) => (
  <CaptionButtons $tall={tall}>
    <CaptionButton aria-label="Minimizar"><Caption kind="min" /></CaptionButton>
    <CaptionButton aria-label="Maximizar"><Caption kind="max" dim={!tall} /></CaptionButton>
    <CaptionButton $wide aria-label="Fechar"><Caption kind="close" /></CaptionButton>
  </CaptionButtons>
);

const serverError = (host: string) =>
  `Uma conexão com o servidor não pôde ser estabelecida -\nURL:http://${host}/ws/wsGADM.php -\nSOAPAction:urn:wsgadm#exportarOffline`;

const ErrorDialog = () => (
  <Dialog role="dialog" aria-labelledby="erro-title">
    <DialogTitle>
      <span id="erro-title">Erro</span>
      <DialogClose aria-label="Fechar"><Caption kind="close" /></DialogClose>
    </DialogTitle>
    <DialogBody>
      <ErrorIcon />
      <Message>
        <p>{serverError('179.184.65.189')}</p>
        <p>{serverError('201.22.93.122')}</p>
      </Message>
    </DialogBody>
    <DialogActions><OkButton>OK</OkButton></DialogActions>
  </Dialog>
);

const Sessions = () => (
  <SessionPanel>
    <PanelHandle aria-label="Recolher">
      <svg width="9" height="11" viewBox="0 0 9 11" aria-hidden="true">
        <path d="M2 1l5 4.500-5 4.500" fill="none" stroke="#26265c" strokeWidth="2.200" />
      </svg>
    </PanelHandle>
    <PanelBox>
      <PanelArt width="252" height="177" viewBox="0 0 252 177" aria-hidden="true">
        <path d="M0 0h252v48H64C48 48 52 82 32 82H0z" fill="#00205c" />
        <path d="M0 0h252v21H110Q80 24 62 34L0 42z" fill="#004b5c" />
        <path d="M0 0h64q-6 12 2 20-10 12-24 14V12L12 8v22L0 40z" fill="#08706f" opacity=".6" />
        <path d="M50 40q30-16 60-19-10 10-60 19z" fill="#123070" />
        <path d="M0 82v90M251 66v106M226 82h25" stroke="#34345e" fill="none" />
      </PanelArt>
      <PanelHeader>
        <TeamViewerIcon size={35} dim />
        <div>Licença gratuita (somente para uso<br />não comercial)</div>
      </PanelHeader>
      <PanelTools>
        <svg width="12" height="12" viewBox="0 0 12 12" aria-hidden="true">
          <path d="M2 2l8 8M10 2l-8 8" stroke="#75798c" strokeWidth="2.400" />
        </svg>
        <Camera /><Phone /><Headset /><Chat /><Pages /><Chevrons />
      </PanelTools>
      <PanelRow $bold>
        <RowLabel><Down />Lista de sessões</RowLabel>
        <svg width="18" height="12" viewBox="0 0 18 12" aria-hidden="true">
          <circle cx="6" cy="6" r="3" fill="none" stroke="#222244" strokeWidth="1.500" />
          <path d="M6 0v3M6 9v3M0 6h3M9 6h3M2 2l2 2M8 8l2 2M10 2L8 4M4 8l-2 2M13 6h4" stroke="#222244" strokeWidth="1.400" />
        </svg>
      </PanelRow>
      <PanelRow>
        <RowLabel>1 001 013 273<Down /></RowLabel>
        <svg width="16" height="12" viewBox="0 0 16 12" aria-hidden="true">
          <path d="M2 0l7 6-3 1 2 4-2 1-2-4-2 2z" fill="#207a92" />
        </svg>
      </PanelRow>
      <PanelLink href="#">www.teamviewer.com</PanelLink>
    </PanelBox>
  </SessionPanel>
);

export default function App() {
  return (
    <>
      <GlobalStyle />
      <Screen>
        <MainWindow>
          <MainTitle>
            <MainTitleText><IsIcon size={16} />GADM - Gerenci</MainTitleText>
            <WindowControls />
          </MainTitle>
          <MainBody>
            <MenuBar><MenuItem>Cadastros</MenuItem><MenuItem>Estoqu</MenuItem></MenuBar>
            <ToolBar>
              <ToolButton><Person />Clientes</ToolButton>
              <ToolButton><House />Fornec.</ToolButton>
              <ToolButton $start><Product />Pr</ToolButton>
            </ToolBar>
            <Workspace />
            <StatusBar>
              <StatusCell>PURIPLAST PLASTIC</StatusCell>
              <StatusCell $end>8 09:24:49</StatusCell>
            </StatusBar>
          </MainBody>
        </MainWindow>

        <ViewerWindow>
          <ViewerTitle>
            <ViewerTitleText>
              <TeamViewerIcon size={14} />
              (1) (139 631 273) - TeamViewer - Licença gratuita (somente para uso não comercial)
            </ViewerTitleText>
            <WindowControls tall />
          </ViewerTitle>
          <Remote>
            <RemoteDesktop>
              <IconGrid $rows={7}>
                {shortcuts.map((s) => (
                  <Shortcut key={s.label}>{s.icon}<span>{s.label}</span></Shortcut>
                ))}
              </IconGrid>
              <IconGrid $rows={1}>
                <Shortcut><FolderFiles blue /><span>WAGNER</span></Shortcut>
              </IconGrid>
              <FoldTab>
                <button aria-label="Tela cheia">
                  <svg width="12" height="12" viewBox="0 0 12 12" aria-hidden="true">
                    <path d="M1 4V1h3M8 1h3v3M11 8v3H8M4 11H1V8M1 1l3.500 3.500M11 1L7.500 4.500M11 11L7.500 7.500M1 11l3.500-3.500" fill="none" stroke="#666" strokeWidth="1.400" />
                  </svg>
                </button>
                <FoldDivider />
                <button aria-label="Expandir">
                  <svg width="12" height="10" viewBox="0 0 12 10" aria-hidden="true">
                    <path d="M1 2l5 5 5-5" fill="none" stroke="#555" strokeWidth="3" />
                  </svg>
                </button>
              </FoldTab>
              <HiddenEdge />
              <ErrorDialog />
              <Sessions />
            </RemoteDesktop>
            <RemoteTaskbar>
              <RemoteStart aria-label="Iniciar"><Orb size={34} /></RemoteStart>
              <Grip />
              <RemoteItems>
                <RemoteItem aria-label="Explorer"><Explorer size={18} /></RemoteItem>
                <RemoteItem aria-label="Media Player"><MediaPlayer /></RemoteItem>
                <RemoteItem aria-label="Chrome"><Chrome size={17} /></RemoteItem>
                <RemoteItem aria-label="Internet Explorer"><InternetExplorer /></RemoteItem>
                <RemoteItem $state="open" aria-label="Skype"><Skype /></RemoteItem>
                <RemoteItem $state="open" aria-label="TeamViewer"><TeamViewerIcon size={17} /></RemoteItem>
                <RemoteItem $state="active" aria-label="Pedidos"><Briefcase size={18} /></RemoteItem>
              </RemoteItems>
              <RemoteTray>
                <Grip />
                <Lang>PT</Lang>
                <TrayIcons $gap={6}>
                  <CclIcon /><Battery /><Speaker /><Signal /><GreenLeaf /><Flag />
                </TrayIcons>
                <RemoteClock>09:25</RemoteClock>
                <RemoteShow aria-label="Mostrar área de trabalho" />
              </RemoteTray>
            </RemoteTaskbar>
          </Remote>
        </ViewerWindow>

        <HostTaskbar>
          <HostStart aria-label="Iniciar"><Orb size={38} /></HostStart>
          <HostItems>
            <HostItem aria-label="Explorer"><Explorer size={17} /></HostItem>
            <HostItem aria-label="Notas"><Notes /></HostItem>
            <HostItem aria-label="Eclipse"><Swirl /></HostItem>
            <HostItem aria-label="Chrome"><Chrome size={16} /></HostItem>
            <HostItem aria-label="Mensageiro"><GreenBall /></HostItem>
            <HostItem $active $stack aria-label="TeamViewer"><TeamViewerIcon size={15} /></HostItem>
            <HostItem aria-label="GADM"><IsIcon size={16} /></HostItem>
            <HostItem aria-label="Paint"><Palette /></HostItem>
          </HostItems>
          <HostTray>
            <TrayIcons $gap={8}>
              <Kaspersky /><GreenCheck /><Network /><BirdIcon /><Speaker size={16} /><UpdateIcon />
            </TrayIcons>
            <HostClock>09:24</HostClock>
            <HostShow aria-label="Mostrar área de trabalho" />
          </HostTray>
        </HostTaskbar>
      </Screen>
    </>
  );
}
